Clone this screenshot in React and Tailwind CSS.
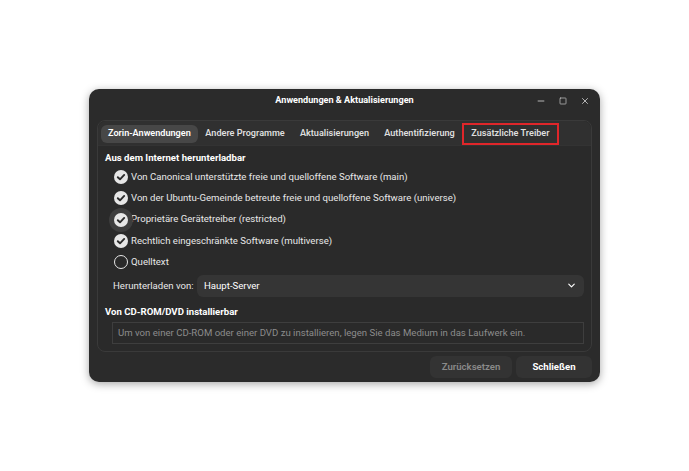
import { ChevronDown, Minus, Square, X } from "lucide-react";

function Check({ on, halo }) {
  return (
    <span className="relative flex h-[14px] w-[14px] shrink-0 items-center justify-center">
      {halo && <span className="absolute -inset-[5px] rounded-full bg-[#3d3d3d]"></span>}
      {on ? (
        <span className="relative flex h-[14px] w-[14px] items-center justify-center rounded-full bg-[#e6e6e6]">
          <svg viewBox="0 0 14 14" className="h-[14px] w-[14px]">
            <path d="M3.8 7.2 L6 9.3 L10.2 4.9" fill="none" stroke="#2b2b2b" strokeWidth="1.9" strokeLinecap="round" strokeLinejoin="round" />
          </svg>
        </span>
      ) : (
        <span className="relative h-[14px] w-[14px] rounded-full border-[1.5px] border-[#e6e6e6]"></span>
      )}
    </span>
  );
}

function Row({ label, on = true, halo }) {
  return (
    <div className="flex h-[21.3px] items-center gap-[3px] pl-[9px]">
      <Check on={on} halo={halo} />
      <span>{label}</span>
    </div>
  );
}

export default function App() {
  const tabs = ["Andere Programme", "Aktualisierungen", "Authentifizierung"];
  return (
    <div
      className="flex h-[471px] w-[689px] items-center justify-center whitespace-nowrap bg-white text-[9.6px] text-[#e8e8e8]"
      style={{ fontFamily: "Roboto, Inter, 'Noto Sans', sans-serif" }}
    >
      <div className="flex h-[293px] w-[511px] flex-col rounded-[10px] bg-[#2b2b2b] shadow-[0_2px_8px_rgba(0,0,0,0.35)]">
        <div className="relative flex h-[28px] shrink-0 items-center justify-center pb-[5px]">
          <span className="text-[9.1px] font-bold text-white">Anwendungen &amp; Aktualisierungen</span>
          <div className="absolute right-[10px] top-[7px] flex items-center gap-[13px] text-[#d0d0d0]">
            <Minus size={10} strokeWidth={2} />
            <Square size={8} strokeWidth={2} />
            <X size={10} strokeWidth={2} />
          </div>
        </div>

        <div className="mx-[8px] mt-[3px] flex h-[232px] flex-col rounded-[8px] border border-[#3a3a3a] bg-[#2a2a2a]">
          <div className="flex h-[25px] shrink-0 items-center rounded-t-[8px] border-b border-[#333] bg-[#303030] pl-[3px] pt-[1px] text-[9.1px]">
            <span className="flex h-[18px] items-center rounded-[6px] bg-[#474747] px-[7px] font-semibold text-white">
              Zorin-Anwendungen
            </span>
            {tabs.map((t) => (
              <span key={t} className="flex h-[18px] items-center px-[7.6px] font-semibold text-[#dedede]">
                {t}
              </span>
            ))}
            <span className="flex h-[22px] items-center border-2 border-[#e0262a] px-[7px] font-semibold text-[#dedede]">
              Zusätzliche Treiber
            </span>
          </div>

          <div className="flex flex-col px-[7px] pt-[5px]">
            <div className="font-bold text-white">Aus dem Internet herunterladbar</div>
            <div className="h-[1px]"></div>
            <Row label="Von Canonical unterstützte freie und quelloffene Software (main)" />
            <Row label="Von der Ubuntu-Gemeinde betreute freie und quelloffene Software (universe)" />
            <Row label="Proprietäre Gerätetreiber (restricted)" halo />
            <Row label="Rechtlich eingeschränkte Software (multiverse)" />
            <Row label="Quelltext" on={false} />
            <div className="mt-[2px] flex items-center pl-[8px]">
              <span className="w-[84px]">Herunterladen von:</span>
              <div className="flex h-[22px] flex-1 items-center justify-between rounded-[6px] bg-[#353535] pl-[7px] pr-[7px] text-white">
                <span>Haupt-Server</span>
                <ChevronDown size={11} strokeWidth={2.5} />
              </div>
            </div>
            <div className="mt-[8px] font-bold text-white">Von CD-ROM/DVD installierbar</div>
            <div className="ml-[7px] mt-[3px] flex h-[22px] items-center border border-[#3e3e3e] px-[5px] text-[#8c8c8c]">
              Um von einer CD-ROM oder einer DVD zu installieren, legen Sie das Medium in das Laufwerk ein.
            </div>
          </div>
        </div>

        <div className="flex justify-end gap-[4px] px-[8px] pt-[4px]">
          <button className="flex h-[22px] w-[82px] items-center justify-center rounded-[6px] bg-[#333333] font-semibold text-[#8a8a8a]">
            Zurücksetzen
          </button>
          <button className="flex h-[22px] w-[76px] items-center justify-center rounded-[6px] bg-[#333333] font-bold text-white">
            Schließen
          </button>
        </div>
      </div>
    </div>
  );
}
